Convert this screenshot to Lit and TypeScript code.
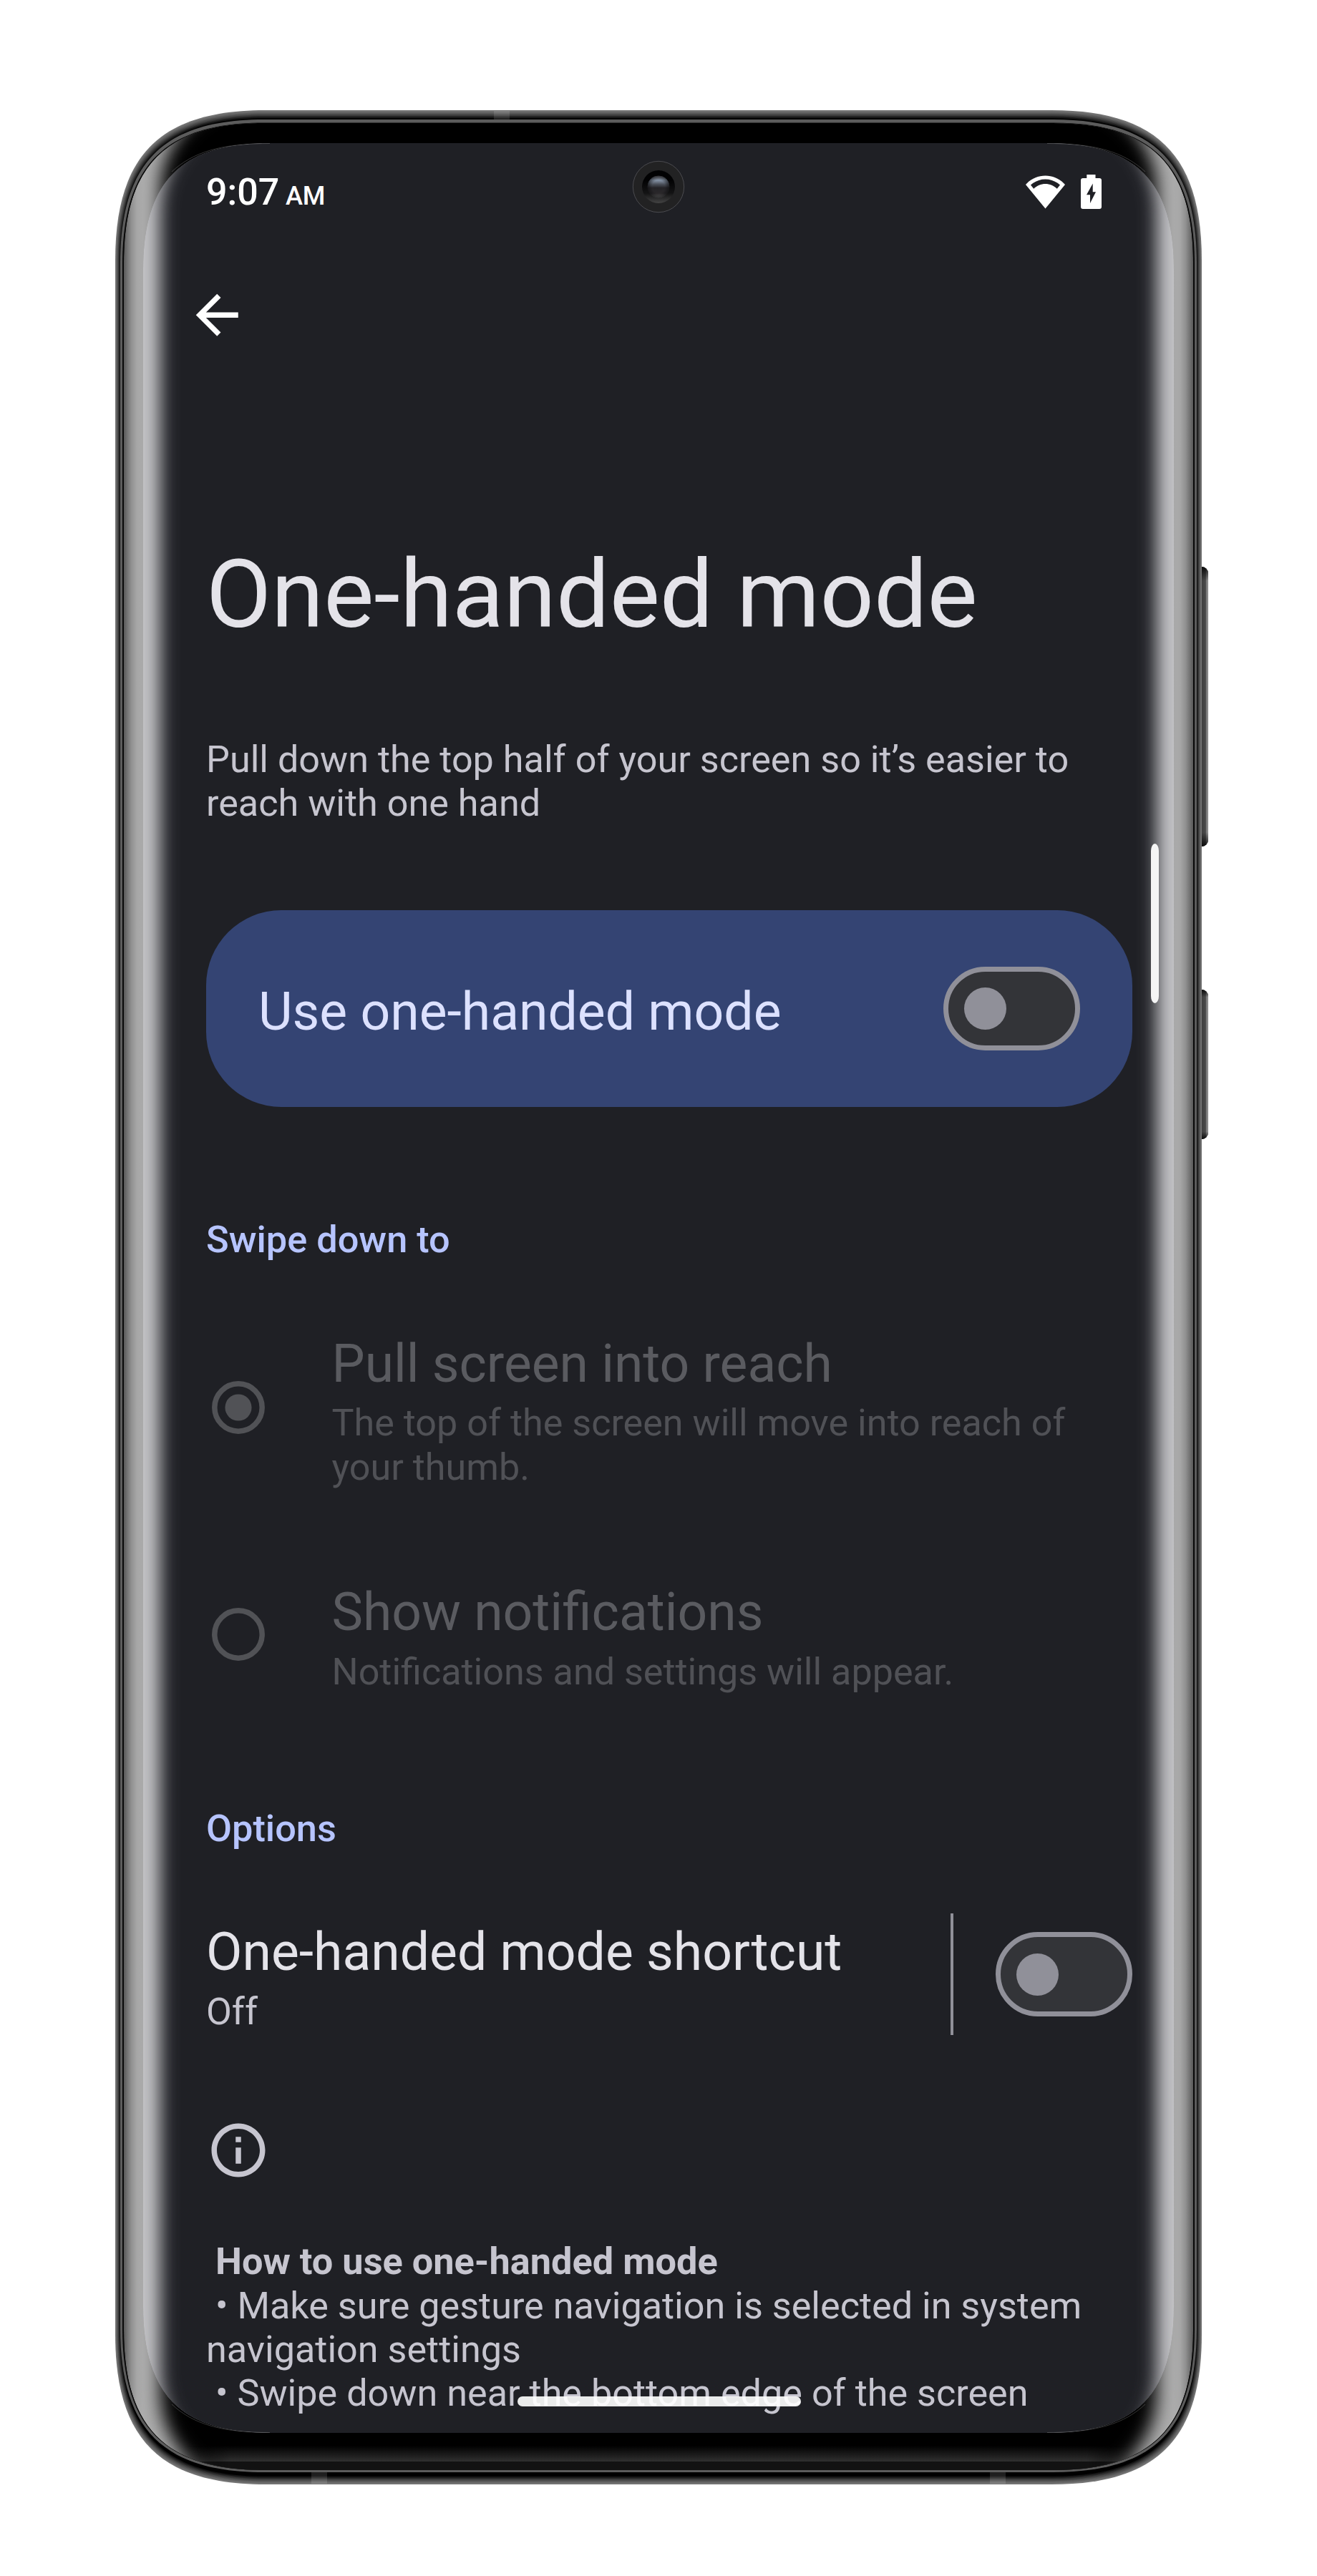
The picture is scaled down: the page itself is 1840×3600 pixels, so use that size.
import { LitElement, css, html, svg } from "lit";
import { customElement, property } from "lit/decorators.js";

/** Rectangle path with smooth (continuous-curvature) corners. */
function smoothRect(x0: number, y0: number, x1: number, y1: number, r: number): string {
  const k = r * 0.3;
  return [
    `M${x0} ${y0 + r}`,
    `C${x0} ${y0 + k} ${x0 + k} ${y0} ${x0 + r} ${y0}`,
    `H${x1 - r}`,
    `C${x1 - k} ${y0} ${x1} ${y0 + k} ${x1} ${y0 + r}`,
    `V${y1 - r}`,
    `C${x1} ${y1 - k} ${x1 - k} ${y1} ${x1 - r} ${y1}`,
    `H${x0 + r}`,
    `C${x0 + k} ${y1} ${x0} ${y1 - k} ${x0} ${y1 - r}`,
    "Z",
  ].join(" ");
}

const SCREEN = smoothRect(200, 200, 1640, 3400, 177);
const GLASS = smoothRect(173, 172, 1667, 3452, 196);

/** Metal rim: a set of nested outlines going from light grey to black. */
const RIM_LEVELS = [118, 106, 92, 76, 58, 40, 20, 0];

@customElement("phone-frame")
export class PhoneFrame extends LitElement {
  static styles = css`
    :host {
      display: block;
    }
    svg {
      display: block;
    }
  `;

  render() {
    return html`
      <svg width="1840" height="3600" viewBox="0 0 1840 3600" aria-hidden="true">
        <defs>
          <linearGradient id="glass" gradientUnits="userSpaceOnUse" x1="173" x2="1667" y1="0" y2="0">
            <stop offset="0" stop-color="#585858" />
            <stop offset="0.0033" stop-color="#747474" />
            <stop offset="0.007" stop-color="#909090" />
            <stop offset="0.012" stop-color="#a6a6a6" />
            <stop offset="0.018" stop-color="#adadad" />
            <stop offset="0.982" stop-color="#adadad" />
            <stop offset="0.988" stop-color="#a6a6a6" />
            <stop offset="0.993" stop-color="#909090" />
            <stop offset="0.9967" stop-color="#747474" />
            <stop offset="1" stop-color="#585858" />
          </linearGradient>
          <linearGradient id="key" x1="0" x2="1" y1="0" y2="0">
            <stop offset="0" stop-color="#404040" />
            <stop offset="0.55" stop-color="#484848" />
            <stop offset="0.7" stop-color="#606060" />
            <stop offset="0.8" stop-color="#a0a0a0" />
            <stop offset="1" stop-color="#6c6c6c" />
          </linearGradient>
          <linearGradient id="keyEnds" x1="0" x2="0" y1="0" y2="1">
            <stop offset="0" stop-color="#000" stop-opacity="0.85" />
            <stop offset="0.05" stop-color="#000" stop-opacity="0" />
            <stop offset="0.95" stop-color="#000" stop-opacity="0" />
            <stop offset="1" stop-color="#000" stop-opacity="0.85" />
          </linearGradient>
          <linearGradient id="chin" x1="0" x2="0" y1="0" y2="1">
            <stop offset="0" stop-color="#303030" stop-opacity="0" />
            <stop offset="1" stop-color="#303030" />
          </linearGradient>
          <linearGradient id="chinMask" gradientUnits="userSpaceOnUse" x1="240" x2="1600" y1="0" y2="0">
            <stop offset="0" stop-color="#000" />
            <stop offset="0.06" stop-color="#fff" />
            <stop offset="0.94" stop-color="#fff" />
            <stop offset="1" stop-color="#000" />
          </linearGradient>
          <mask id="chinFade">
            <rect x="200" y="3400" width="1440" height="60" fill="url(#chinMask)" />
          </mask>
          <filter
            id="soft"
            filterUnits="userSpaceOnUse"
            x="100"
            y="60"
            width="1640"
            height="3500"
            color-interpolation-filters="sRGB"
          >
            <feGaussianBlur stdDeviation="12" />
          </filter>
          <clipPath id="glassClip"><path d=${GLASS} /></clipPath>
          <clipPath id="screenClip"><path d=${SCREEN} /></clipPath>
        </defs>

        ${[
          [792, 391],
          [1383, 209],
        ].map(
          ([y, h]) => svg`
            <rect x="1669" y=${y} width="19" height=${h} rx="9" fill="#333" />
            <path d=${`M1679 ${y}a9 9 0 0 1 9 9v${h - 18}a9 9 0 0 1-9 9z`} fill="url(#key)" />
            <path d=${`M1679 ${y}a9 9 0 0 1 9 9v${h - 18}a9 9 0 0 1-9 9z`} fill="url(#keyEnds)" />
          `
        )}

        ${RIM_LEVELS.map((v, i) => {
          const sx = i;
          const sy = i * 1.6;
          return svg`<path d=${smoothRect(161 + sx, 154 + sy, 1679 - sx, 3472 - sy, 210 - i)} fill=${`rgb(${v},${v},${v})`} />`;
        })}
        <g fill="#fff" fill-opacity="0.12">
          <rect x="690" y="155" width="22" height="13" />
          <rect x="435" y="3455" width="22" height="16" />
          <rect x="1383" y="3455" width="22" height="16" />
        </g>
        <path d=${smoothRect(168, 167, 1672, 3455, 201)} fill="#5c5c5c" />
        <path d=${smoothRect(171, 171.5, 1669, 3452, 198)} fill="#080808" />

        <g clip-path="url(#glassClip)">
          <path d=${GLASS} fill="url(#glass)" />
          <rect x="224" y="138" width="1392" height="3336" rx="130" fill="#000" filter="url(#soft)" />
          <rect x="240" y="3440" width="1360" height="12" fill="#121212" mask="url(#chinFade)" />
          <rect x="220" y="3418" width="1400" height="22" fill="url(#chin)" mask="url(#chinFade)" />
        </g>

        <g clip-path="url(#screenClip)">
          <path d=${SCREEN} fill="#c3c3c6" />
          <rect x="224" y="155" width="1392" height="3300" rx="140" fill="#1f2025" filter="url(#soft)" />
        </g>
        <g fill="none" stroke="#fff" stroke-opacity="0.2">
          <path d="M240 240C270 212 310 200.500 377 200.500" />
          <path d="M1600 240C1570 212 1530 200.500 1463 200.500" />
          <path d="M240 3360C270 3388 310 3399.500 377 3399.500" />
          <path d="M1600 3360C1570 3388 1530 3399.500 1463 3399.500" />
        </g>
      </svg>
    `;
  }
}

@customElement("front-camera")
export class FrontCamera extends LitElement {
  static styles = css`
    :host,
    svg {
      display: block;
    }
  `;

  render() {
    return html`
      <svg width="74" height="74" viewBox="-37 -37 74 74" aria-hidden="true">
        <defs>
          <linearGradient id="ring" x1="0" x2="0" y1="0" y2="1">
            <stop offset="0.3" stop-color="#020203" />
            <stop offset="0.7" stop-color="#141415" />
            <stop offset="1" stop-color="#444" />
          </linearGradient>
          <linearGradient id="lens" x1="0" x2="0" y1="0" y2="1">
            <stop offset="0" stop-color="#66666c" />
            <stop offset="0.2" stop-color="#8795a8" />
            <stop offset="0.38" stop-color="#4c515b" />
            <stop offset="0.55" stop-color="#242327" />
            <stop offset="0.8" stop-color="#2a282a" />
            <stop offset="1" stop-color="#6a6a6a" />
          </linearGradient>
          <radialGradient id="lensEdge">
            <stop offset="0.6" stop-color="#0b0b0d" stop-opacity="0" />
            <stop offset="1" stop-color="#0b0b0d" stop-opacity="0.6" />
          </radialGradient>
        </defs>
        <circle r="35.700" fill="#222223" stroke="#56565a" stroke-width="0.800" />
        <circle r="23" fill="url(#ring)" />
        <circle r="15.300" fill="url(#lens)" />
        <circle r="15.300" fill="url(#lensEdge)" />
      </svg>
    `;
  }
}

@customElement("toggle-switch")
export class ToggleSwitch extends LitElement {
  static styles = css`
    :host {
      display: flex;
      flex: none;
      align-items: center;
      box-sizing: border-box;
      width: 191px;
      height: 117.5px;
      padding-left: 22px;
      border: 7.5px solid #909099;
      border-radius: 59px;
      background: #333438;
    }
    .thumb {
      width: 59px;
      height: 59px;
      border-radius: 50%;
      background: #909099;
    }
  `;

  render() {
    return html`<div class="thumb"></div>`;
  }
}

@customElement("radio-option")
export class RadioOption extends LitElement {
  @property() heading = "";
  @property({ attribute: false }) lines: string[] = [];
  @property({ type: Boolean }) checked = false;

  static styles = css`
    :host {
      display: flex;
      align-items: center;
    }
    svg {
      display: block;
      flex: none;
      width: 90px;
      height: 90px;
      margin: 0 86px 8px -0.500px;
      color: #515256;
    }
    .text {
      display: flex;
      flex-direction: column;
      gap: 8.900px;
      white-space: nowrap;
    }
    .heading {
      font-size: 73.2px;
      line-height: 88px;
      color: #5a5b60;
    }
    .detail {
      font-size: 52.1px;
      line-height: 61.3px;
      color: #505156;
    }
  `;

  render() {
    return html`
      <svg viewBox="0 0 24 24" aria-hidden="true">
        <circle cx="12" cy="12" r="8.850" fill="none" stroke="currentColor" stroke-width="2" />
        ${this.checked ? svg`<circle cx="12" cy="12" r="4.950" fill="currentColor" />` : null}
      </svg>
      <div class="text">
        <div class="heading">${this.heading}</div>
        <div class="detail">${this.lines.map((line) => html`<div>${line}</div>`)}</div>
      </div>
    `;
  }
}

@customElement("app-root")
export class AppRoot extends LitElement {
  static styles = css`
    :host {
      display: block;
      width: 1840px;
      height: 3600px;
      overflow: hidden;
      background: #fff;
      font-family: Roboto, "Liberation Sans", sans-serif;
      color: #e4e3e9;
    }
    .phone {
      display: grid;
      position: relative;
    }
    .phone > phone-frame,
    .phone > .content {
      grid-area: 1 / 1;
    }
    .content {
      position: relative;
      display: flex;
      flex-direction: column;
      box-sizing: border-box;
      width: 1840px;
      height: 3600px;
      padding: 236.4px 258px 0 288px;
      white-space: nowrap;
    }
    .status {
      display: flex;
      align-items: flex-start;
      justify-content: space-between;
      height: 62px;
      padding-right: 43.5px;
      color: #fff;
    }
    .time {
      padding-top: 1.2px;
      font-size: 52px;
      line-height: 62px;
      font-weight: 500;
    }
    .meridiem {
      margin-left: 8.5px;
      font-size: 36.2px;
    }
    .indicators {
      display: flex;
      align-items: flex-end;
      gap: 22px;
      padding-top: 8px;
    }
    .indicators svg,
    .back svg,
    .info {
      display: block;
    }
    .back {
      margin: 97.6px 0 0 -29.3px;
      color: #fff;
    }
    h1 {
      margin: 270px 0 0;
      font-size: 132.4px;
      line-height: 154px;
      font-weight: 400;
    }
    .intro {
      margin-top: 122.4px;
      color: #c6c5cf;
    }
    .body {
      font-size: 52.15px;
      line-height: 61.3px;
    }
    .card {
      display: flex;
      align-items: center;
      justify-content: space-between;
      box-sizing: border-box;
      height: 275.3px;
      margin-top: 118.5px;
      padding: 0 73.5px 0 73px;
      border-radius: 105px;
      background: #344473;
      color: #dce1ff;
    }
    .item-title {
      font-size: 73.3px;
      line-height: 88px;
    }
    .card .item-title {
      padding-top: 8px;
    }
    h2 {
      margin: 153.3px 0 0;
      font-size: 52.3px;
      line-height: 62px;
      font-weight: 500;
      color: #b6c4ff;
    }
    .first {
      margin-top: 99px;
    }
    .second {
      margin-top: 128.3px;
    }
    h2.options {
      margin-top: 156.3px;
    }
    .shortcut {
      display: flex;
      align-items: center;
      height: 170px;
      margin-top: 88.4px;
    }
    .shortcut .text {
      display: flex;
      flex-direction: column;
      flex: 1;
      gap: 8.7px;
      padding-top: 8px;
    }
    .shortcut .state {
      color: #c6c5cf;
    }
    .divider {
      width: 4px;
      height: 170px;
      margin-right: 59px;
      background: #909099;
    }
    .shortcut toggle-switch {
      margin-right: 0;
    }
    .info {
      width: 90px;
      height: 90px;
      margin-top: 116px;
      margin-left: -0.5px;
      color: #c6c5cf;
    }
    .help {
      margin-top: 80px;
      color: #c6c5cf;
      white-space: pre;
    }
    .help strong {
      font-weight: 700;
      font-size: 52.3px;
    }
    front-camera {
      position: absolute;
      left: 883px;
      top: 224px;
    }
    .edge-handle {
      position: absolute;
      left: 1607.5px;
      top: 1179.3px;
      width: 11.5px;
      height: 222.5px;
      border-radius: 6px / 11px;
      background: #f5f5f5;
    }
    .home-bar {
      position: absolute;
      left: 722.5px;
      top: 3349px;
      width: 396px;
      height: 13.5px;
      border-radius: 7px;
      background: rgba(255, 255, 255, 0.91);
    }
  `;

  render() {
    return html`
      <div class="phone">
        <phone-frame></phone-frame>
        <div class="content">
          <div class="status">
            <div class="time">9:07<span class="meridiem">AM</span></div>
            <div class="indicators">
              <svg width="55" height="47" viewBox="0 0 55 47" fill="#fff">
                <path
                  fill-rule="evenodd"
                  d="M27.500 46.500L0 13C7 5 17 .5 27.500 .5S48 5 55 13zM7 13.500L11.200 18.800C15.500 14.500 21.500 12 27.500 12S39.500 14.500 43.800 18.800L48 13.500C42.500 8.500 35 5.500 27.500 5.500S12.500 8.500 7 13.500z"
                />
              </svg>
              <svg width="29" height="48" viewBox="0 0 29 48">
                <path
                  fill="#fff"
                  d="M8.300 0H20.500V5H26A3 3 0 0 1 29 8V45A3 3 0 0 1 26 48H3A3 3 0 0 1 0 45V8A3 3 0 0 1 3 5H8.300z"
                />
                <path fill="#1f2025" d="M16.700 12.500L8 28.300H13V40L21 24.300H16.700z" />
              </svg>
            </div>
          </div>

          <div class="back">
            <svg width="88.500" height="88.500" viewBox="0 0 24 24" fill="currentColor">
              <path d="M20 11H7.830l5.590-5.590L12 4l-8 8 8 8 1.410-1.410L7.830 13H20v-2z" />
            </svg>
          </div>

          <h1>One-handed mode</h1>

          <div class="intro body">
            <div>Pull down the top half of your screen so it’s easier to</div>
            <div>reach with one hand</div>
          </div>

          <div class="card">
            <div class="item-title">Use one-handed mode</div>
            <toggle-switch></toggle-switch>
          </div>

          <h2>Swipe down to</h2>
          <radio-option
            class="first"
            checked
            heading="Pull screen into reach"
            .lines=${["The top of the screen will move into reach of", "your thumb."]}
          ></radio-option>
          <radio-option
            class="second"
            heading="Show notifications"
            .lines=${["Notifications and settings will appear."]}
          ></radio-option>

          <h2 class="options">Options</h2>
          <div class="shortcut">
            <div class="text">
              <div class="item-title">One-handed mode shortcut</div>
              <div class="state body">Off</div>
            </div>
            <div class="divider"></div>
            <toggle-switch></toggle-switch>
          </div>

          <svg class="info" viewBox="0 0 24 24" fill="currentColor">
            <path
              d="M11 7h2v2h-2zm0 4h2v6h-2zm1-9C6.480 2 2 6.480 2 12s4.480 10 10 10 10-4.480 10-10S17.520 2 12 2zm0 18c-4.410 0-8-3.590-8-8s3.590-8 8-8 8 3.590 8 8-3.590 8-8 8z"
            />
          </svg>

          <div class="help body"><div><strong> How to use one-handed mode</strong></div><div> • Make sure gesture navigation is selected in system</div><div>navigation settings</div><div> • Swipe down near the bottom edge of the screen</div></div>
        </div>

        <front-camera></front-camera>
        <div class="edge-handle"></div>
        <div class="home-bar"></div>
      </div>
    `;
  }
}
